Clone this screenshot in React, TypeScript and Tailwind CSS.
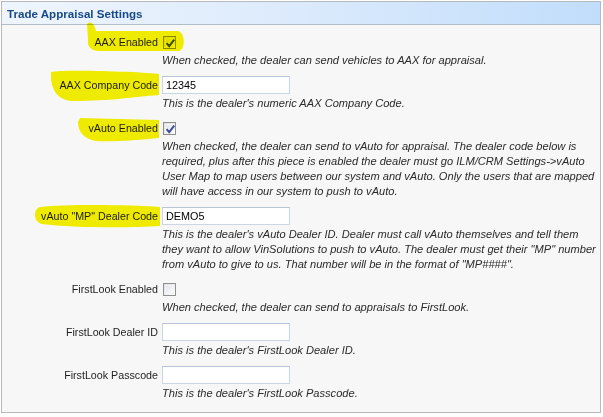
const font = { fontFamily: '"Liberation Sans", Arial, sans-serif' };

function Checkbox({ checked }: { checked?: boolean }) {
  return (
    <div className="ml-[1px] w-[13px] h-[13px] border border-[#8e8f8f] bg-gradient-to-br from-[#dcdcdc] to-white p-[1px]">
      <div className="relative w-full h-full border border-[#f4f4f4] bg-gradient-to-br from-[#e2e5ec] to-[#fbfbfc]">
        {checked && (
          <svg className="absolute -top-[1px] -left-[1px]" width="11" height="11" viewBox="0 0 11 11">
            <path d="M1.6 5.2 L4.2 8.2 L9.2 1.6" fill="none" stroke="#3d4f94" strokeWidth="2" />
          </svg>
        )}
      </div>
    </div>
  );
}

function TextBox({ value }: { value?: string }) {
  return (
    <div className="w-[128px] h-[18px] bg-white border border-[#c9d6e6] border-t-[#b7c5d8] pl-[3px] flex items-center text-[10.8px] text-black">
      {value}
    </div>
  );
}

function Field({
  label,
  control,
  lines,
}: {
  label: string;
  control: React.ReactNode;
  lines: string[];
}) {
  return (
    <div className="mb-[7px]">
      <div className="flex items-center h-[20px]">
        <div className="w-[160px] pr-[4px] text-right text-[10.7px] text-[#1e1e1e] whitespace-nowrap">{label}</div>
        {control}
      </div>
      <div className="mt-[1px] pl-[160px] italic text-[11.1px] leading-[15px] text-[#2a2a2a]">
        {lines.map((l, i) => (
          <div key={i} className="whitespace-nowrap">
            {l}
          </div>
        ))}
      </div>
    </div>
  );
}

export default function App() {
  return (
    <div className="relative w-[603px] h-[417px] bg-white pt-[1px] pl-[1px]" style={font}>
      <div className="w-[600px] h-[412px] border border-[#b8b8b8] bg-[#f7f7f7]">
        {/* header */}
        <div className="h-[23px] border-b border-[#b2bdca] bg-gradient-to-r from-[#eff5fd] via-[#dbeafc] to-[#c1ddfb] flex items-center pl-[5px] pt-[1px]">
          <span className="font-bold text-[11.6px] text-[#17498a]">Trade Appraisal Settings</span>
        </div>

        <div className="pt-[7px]">
          <Field
            label="AAX Enabled"
            control={<Checkbox checked />}
            lines={["When checked, the dealer can send vehicles to AAX for appraisal."]}
          />
          <Field
            label="AAX Company Code"
            control={<TextBox value="12345" />}
            lines={["This is the dealer's numeric AAX Company Code."]}
          />
          <Field
            label="vAuto Enabled"
            control={<Checkbox checked />}
            lines={[
              "When checked, the dealer can send to vAuto for appraisal. The dealer code below is",
              "required, plus after this piece is enabled the dealer must go ILM/CRM Settings->vAuto",
              "User Map to map users between our system and vAuto. Only the users that are mapped",
              "will have access in our system to push to vAuto.",
            ]}
          />
          <Field
            label={'vAuto "MP" Dealer Code'}
            control={<TextBox value="DEMO5" />}
            lines={[
              "This is the dealer's vAuto Dealer ID. Dealer must call vAuto themselves and tell them",
              'they want to allow VinSolutions to push to vAuto. The dealer must get their "MP" number',
              'from vAuto to give to us. That number will be in the format of "MP####".',
            ]}
          />
          <Field
            label="FirstLook Enabled"
            control={<Checkbox />}
            lines={["When checked, the dealer can send to appraisals to FirstLook."]}
          />
          <Field
            label="FirstLook Dealer ID"
            control={<TextBox />}
            lines={["This is the dealer's FirstLook Dealer ID."]}
          />
          <Field
            label="FirstLook Passcode"
            control={<TextBox />}
            lines={["This is the dealer's FirstLook Passcode."]}
          />
        </div>
      </div>

      {/* highlighter marks drawn over the form */}
      <svg
        className="absolute top-0 left-0 pointer-events-none mix-blend-multiply"
        width="603"
        height="417"
        viewBox="0 0 603 417"
      >
        <g fill="#f7f300">
          <path d="M87,24 C89,21 94,22 96,31 L178,31 C185,32 186,49 179,51 L99,51 C91,51 87,46 88,40 Z" />
          <path d="M51,72 C62,69 148,72 159,74 L159,95 C132,97 112,101 72,101 C58,100 50,90 51,72 Z" />
          <path d="M80,118 L159,120 L159,138 C140,140 112,142 96,141 C84,139 78,132 78,122 Z" />
          <path d="M40,207 C70,204 132,205 160,207 L160,226 C130,228 72,228 42,224 C33,222 33,209 40,207 Z" />
        </g>
      </svg>
    </div>
  );
}
